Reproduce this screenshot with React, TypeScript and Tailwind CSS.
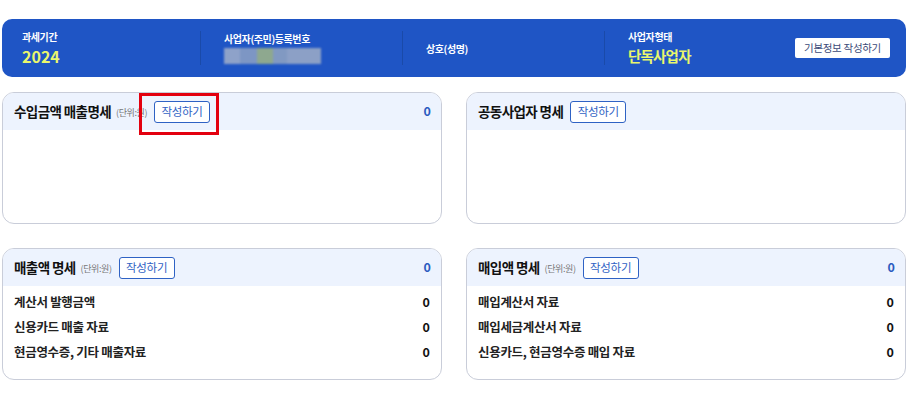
const font = { fontFamily: '"Noto Sans CJK KR", "Noto Sans", sans-serif' };

function WriteButton({ marked = false }: { marked?: boolean }) {
  return (
    <span className="relative ml-[7px] inline-flex">
      <button className="h-[22px] w-[56px] rounded-[3px] border border-[#2f62c4] bg-white text-[11.5px] tracking-[-0.3px] text-[#2f62c4] leading-none">
        작성하기
      </button>
      {/* annotation box from the original capture */}
      {marked && (
        <span className="pointer-events-none absolute left-[-15px] right-[-9px] top-[-8px] bottom-[-12px] border-[3px] border-[#e3000f]" />
      )}
    </span>
  );
}

function Unit() {
  return (
    <span className="ml-[5px] mt-[3px] text-[9px] tracking-[-0.4px] text-[#777]">(단위:원)</span>
  );
}

type CardProps = {
  title: string;
  unit?: boolean;
  total?: string;
  marked?: boolean;
  rows?: string[];
};

function Card({ title, unit, total, marked, rows = [] }: CardProps) {
  return (
    <div className="h-[132px] overflow-hidden rounded-[12px] border border-[#c9cdd9] bg-white">
      <div className="flex h-[37px] items-center bg-[#edf3fe] pl-[11px] pr-[10px]">
        <span className="text-[13.5px] font-bold tracking-[-0.6px] text-[#111]">{title}</span>
        {unit && <Unit />}
        <WriteButton marked={marked} />
        {total && (
          <span className="ml-auto text-[12.5px] font-bold text-[#2b5bc0]">{total}</span>
        )}
      </div>
      {rows.length > 0 && (
        <div className="flex flex-col pl-[11px] pr-[11px] pt-[4px]">
          {rows.map((r) => (
            <div key={r} className="flex h-[25px] items-center justify-between">
              <span className="text-[12.5px] font-semibold tracking-[-0.3px] text-[#222]">{r}</span>
              <span className="text-[12.5px] font-bold text-[#111]">0</span>
            </div>
          ))}
        </div>
      )}
    </div>
  );
}

export default function App() {
  return (
    <div className="min-h-[398px] bg-white pt-[19px]" style={font}>
      {/* 기본 정보 바 */}
      <div className="ml-[2px] flex h-[58px] w-[904px] items-center rounded-[10px] bg-[#1f55c5] pl-5 pr-4">
        <div className="flex w-[178px] flex-col">
          <span className="text-[10px] font-bold leading-[14px] tracking-[-0.4px] text-white">과세기간</span>
          <span className="mt-[2px] text-[16px] font-bold leading-[20px] text-[#e9f66c]">2024</span>
        </div>
        <div className="h-[34px] w-px bg-[#1a4aa9]" />
        <div className="flex w-[201px] flex-col pl-[23px]">
          <span className="text-[10px] font-bold leading-[14px] tracking-[-0.4px] text-white">
            사업자(주민)등록번호
          </span>
          <div className="mt-[2px] flex h-[16px] w-[97px] blur-[1px]">
            <div className="w-[16px] bg-[#8ea2c9]" />
            <div className="w-[17px] bg-[#7d96c4]" />
            <div className="w-[16px] bg-[#8ea88f]" />
            <div className="w-[14px] bg-[#8199c2]" />
            <div className="flex-1 bg-[#8ca0c6]" />
          </div>
        </div>
        <div className="h-[34px] w-px bg-[#1a4aa9]" />
        <div className="flex w-[201px] items-center pl-[23px]">
          <span className="text-[10px] font-bold tracking-[-0.4px] text-white">상호(성명)</span>
        </div>
        <div className="h-[34px] w-px bg-[#1a4aa9]" />
        <div className="flex flex-1 flex-col pl-[23px]">
          <span className="text-[10px] font-bold leading-[14px] tracking-[-0.4px] text-white">사업자형태</span>
          <span className="mt-[2px] text-[14.5px] font-bold leading-[20px] tracking-[-0.8px] text-[#e9f66c]">
            단독사업자
          </span>
        </div>
        <button className="h-[20px] w-[95px] rounded-[2px] bg-white text-[10.5px] leading-none tracking-[-0.3px] text-[#3b4a78]">
          기본정보 작성하기
        </button>
      </div>

      {/* 명세 카드 */}
      <div className="ml-[2px] mt-[15px] grid w-[904px] grid-cols-2 gap-x-6 gap-y-6">
        <Card title="수입금액 매출명세" unit total="0" marked />
        <Card title="공동사업자 명세" />
        <Card
          title="매출액 명세"
          unit
          total="0"
          rows={["계산서 발행금액", "신용카드 매출 자료", "현금영수증, 기타 매출자료"]}
        />
        <Card
          title="매입액 명세"
          unit
          total="0"
          rows={["매입계산서 자료", "매입세금계산서 자료", "신용카드, 현금영수증 매입 자료"]}
        />
      </div>
    </div>
  );
}
